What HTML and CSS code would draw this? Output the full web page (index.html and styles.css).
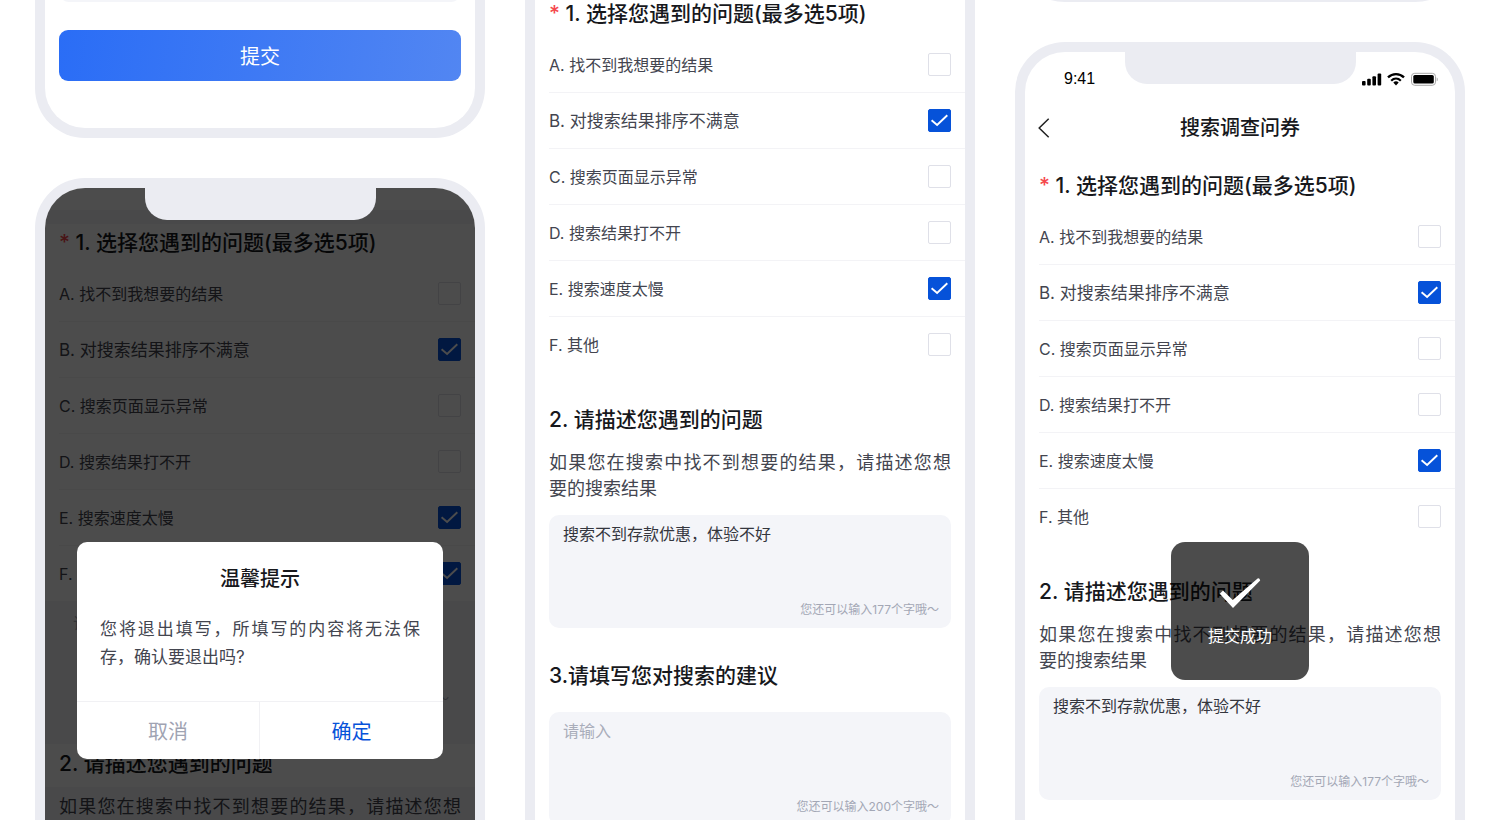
FILE: index.html
```html
<!DOCTYPE html>
<html lang="zh-CN">
<head>
<meta charset="utf-8">
<title>搜索调查问券</title>
<link rel="stylesheet" href="styles.css">
</head>
<body>
<svg class="defs" aria-hidden="true">
  <symbol id="tick" viewBox="0 0 23 23"><path d="M3.6 11.2 9.1 16 19.3 6.2" fill="none" stroke="#fff" stroke-width="1.9"/></symbol>
</svg>
<main class="board">

  <section class="column">
    <div class="phone phone-end">
      <div class="clip"><div class="field-foot"></div></div>
      <button class="submit" type="button">提交</button>
    </div>

    <div class="phone phone-start">
      <div class="notch"></div>
      <form class="form form-dim">
        <div class="strip"></div>
        <h2 class="question"><span class="star">*</span> 1. 选择您遇到的问题(最多选5项)</h2>
        <div class="options">
          <label class="option">A. 找不到我想要的结果<span class="box"><input type="checkbox"><svg><use href="#tick"/></svg></span></label>
          <label class="option option-large">B. 对搜索结果排序不满意<span class="box"><input type="checkbox" checked><svg><use href="#tick"/></svg></span></label>
          <label class="option">C. 搜索页面显示异常<span class="box"><input type="checkbox"><svg><use href="#tick"/></svg></span></label>
          <label class="option">D. 搜索结果打不开<span class="box"><input type="checkbox"><svg><use href="#tick"/></svg></span></label>
          <label class="option">E. 搜索速度太慢<span class="box"><input type="checkbox" checked><svg><use href="#tick"/></svg></span></label>
          <label class="option">F. 其他<span class="box"><input type="checkbox" checked><svg><use href="#tick"/></svg></span></label>
        </div>
        <div class="band">
          <div class="field"><textarea aria-label="其他问题" placeholder="请输入"></textarea><span class="counter">您还可以输入200个字哦～</span></div>
        </div>
        <h2 class="question question-band">2. 请描述您遇到的问题</h2>
        <p class="hint hint-band"><span class="hint-full">如果您在搜索中找不到想要的结果，请描述您想</span><span>要的搜索结果</span></p>
      </form>
      <div class="shade"></div>
      <div class="dialog" role="dialog" aria-labelledby="dialog-title">
        <h3 class="dialog-title" id="dialog-title">温馨提示</h3>
        <p class="dialog-text">您将退出填写，所填写的内容将无法保存，确认要退出吗?</p>
        <div class="dialog-actions">
          <button type="button" class="cancel">取消</button>
          <button type="button" class="confirm">确定</button>
        </div>
      </div>
    </div>
  </section>

  <section class="column">
    <div class="phone phone-middle">
      <form class="form">
        <h2 class="question"><span class="star">*</span> 1. 选择您遇到的问题(最多选5项)</h2>
        <div class="options">
          <label class="option">A. 找不到我想要的结果<span class="box"><input type="checkbox"><svg><use href="#tick"/></svg></span></label>
          <label class="option option-large">B. 对搜索结果排序不满意<span class="box"><input type="checkbox" checked><svg><use href="#tick"/></svg></span></label>
          <label class="option">C. 搜索页面显示异常<span class="box"><input type="checkbox"><svg><use href="#tick"/></svg></span></label>
          <label class="option">D. 搜索结果打不开<span class="box"><input type="checkbox"><svg><use href="#tick"/></svg></span></label>
          <label class="option">E. 搜索速度太慢<span class="box"><input type="checkbox" checked><svg><use href="#tick"/></svg></span></label>
          <label class="option">F. 其他<span class="box"><input type="checkbox"><svg><use href="#tick"/></svg></span></label>
        </div>
        <h2 class="question question-next">2. 请描述您遇到的问题</h2>
        <p class="hint"><span class="hint-full">如果您在搜索中找不到想要的结果，请描述您想</span><span>要的搜索结果</span></p>
        <div class="field"><textarea aria-label="请描述您遇到的问题">搜索不到存款优惠，体验不好</textarea><span class="counter">您还可以输入177个字哦～</span></div>
        <h2 class="question question-next">3.请填写您对搜索的建议</h2>
        <div class="field field-far"><textarea aria-label="请填写您对搜索的建议" placeholder="请输入"></textarea><span class="counter">您还可以输入200个字哦～</span></div>
      </form>
    </div>
  </section>

  <section class="column">
    <div class="clip"><div class="phone phone-foot"></div></div>

    <div class="phone phone-start">
      <div class="notch"></div>
      <div class="status">
        <span>9:41</span>
        <svg class="status-icons" width="77" height="14" viewBox="0 0 77 14">
          <rect x="1" y="9" width="3.6" height="4.4" rx="1"/>
          <rect x="6.2" y="6.8" width="3.6" height="6.6" rx="1"/>
          <rect x="11.4" y="4.2" width="3.6" height="9.2" rx="1"/>
          <rect x="16.6" y="1.4" width="3.6" height="12" rx="1"/>
          <path d="M27 5.4C31.5.9 38.5.9 43 5.4" fill="none" stroke="#000" stroke-width="2.3"/>
          <path d="M30.2 8.7C33 6 37 6 39.8 8.7" fill="none" stroke="#000" stroke-width="2.2"/>
          <path d="M32.3 10.6a3.9 3.9 0 0 1 5.4 0L35 13.4z"/>
          <rect x="50.5" y="1.3" width="24" height="12" rx="3.2" fill="none" stroke="#a8a8a8"/>
          <rect x="52.3" y="3" width="20.5" height="8.6" rx="1.6"/>
          <path d="M75.7 5.5v3.8c1.4-.6 1.4-3.2 0-3.8z" fill="#a8a8a8"/>
        </svg>
      </div>
      <header class="nav">
        <button class="back" type="button" aria-label="返回"><svg width="12" height="20" viewBox="0 0 12 20"><path d="M10.7.7 1.2 10l9.500 9.300" fill="none" stroke="#222" stroke-width="1.5"/></svg></button>
        <h1 class="nav-title">搜索调查问券</h1>
      </header>
      <form class="form form-page">
        <h2 class="question"><span class="star">*</span> 1. 选择您遇到的问题(最多选5项)</h2>
        <div class="options">
          <label class="option">A. 找不到我想要的结果<span class="box"><input type="checkbox"><svg><use href="#tick"/></svg></span></label>
          <label class="option option-large">B. 对搜索结果排序不满意<span class="box"><input type="checkbox" checked><svg><use href="#tick"/></svg></span></label>
          <label class="option">C. 搜索页面显示异常<span class="box"><input type="checkbox"><svg><use href="#tick"/></svg></span></label>
          <label class="option">D. 搜索结果打不开<span class="box"><input type="checkbox"><svg><use href="#tick"/></svg></span></label>
          <label class="option">E. 搜索速度太慢<span class="box"><input type="checkbox" checked><svg><use href="#tick"/></svg></span></label>
          <label class="option">F. 其他<span class="box"><input type="checkbox"><svg><use href="#tick"/></svg></span></label>
        </div>
        <h2 class="question question-next">2. 请描述您遇到的问题</h2>
        <p class="hint"><span class="hint-full">如果您在搜索中找不到想要的结果，请描述您想</span><span>要的搜索结果</span></p>
        <div class="field"><textarea aria-label="请描述您遇到的问题">搜索不到存款优惠，体验不好</textarea><span class="counter">您还可以输入177个字哦～</span></div>
      </form>
      <div class="toast" role="status">
        <svg width="42" height="30" viewBox="0 0 42 30"><path d="M.8 15.7 4 12.6 13.7 22 38.6.5Q40.5-.2 41.2 2.4L14 30z" fill="#fff"/></svg>
        <span>提交成功</span>
      </div>
    </div>
  </section>

</main>
</body>
</html>
```
FILE: styles.css
```css
* { box-sizing: border-box; }

body {
  margin: 0;
  background: #fff;
  color: #43454f;
  font-family: Inter, "Noto Sans CJK SC", sans-serif;
  font-size: 16px;
}

h1, h2, h3, p { margin: 0; }

button, textarea { font-family: inherit; }

button {
  border: 0;
  padding: 0;
  background: none;
}

.defs {
  display: block;
  width: 0;
  height: 0;
}

.board {
  display: grid;
  grid-template-columns: repeat(3, minmax(0, 1fr));
  gap: 40px;
  height: 100vh;
  padding: 0 35px;
  overflow: hidden;
}

.column {
  display: flex;
  flex-direction: column;
  gap: 40px;
}

/* Phone frames */
.phone {
  position: relative;
  border: 10px solid #ebecf2;
  background: #fff;
  overflow: hidden;
}

.phone-end {
  flex: none;
  border-top: 0;
  border-radius: 0 0 50px 50px;
  padding: 0 14px 47px;
}

.phone-start {
  flex: 1 0 auto;
  border-bottom: 0;
  border-radius: 50px 50px 0 0;
}

.phone-middle {
  flex: 1 0 auto;
  border-top: 0;
  border-bottom: 0;
}

.phone-foot {
  flex: 1 0 auto;
  height: 100px;
  border-radius: 50px;
}

.clip {
  display: flex;
  flex: none;
  align-items: flex-end;
  height: 2px;
  overflow: hidden;
}

.field-foot {
  flex: 1;
  height: 40px;
  border-radius: 10px;
  background: #f4f5f9;
}

.notch {
  position: absolute;
  z-index: 2;
  top: 0;
  left: 50%;
  width: 231px;
  height: 32px;
  margin-left: -115px;
  border-radius: 0 0 22px 22px;
  background: #ebecf2;
}

.submit {
  display: block;
  width: 100%;
  height: 51px;
  margin-top: 28px;
  border-radius: 9px;
  background: linear-gradient(100deg, #2a6df6, #5286f2);
  color: #fff;
  font-size: 20px;
}

/* Status and navigation bars */
.status {
  display: flex;
  align-items: center;
  justify-content: space-between;
  height: 54px;
  padding: 0 17px 0 39px;
  color: #000;
  font-family: "Liberation Sans", sans-serif;
}

.nav {
  display: grid;
  grid-template-columns: 40px 1fr 40px;
  align-items: center;
  height: 44px;
  padding: 0 13px;
}

.back {
  display: flex;
  align-items: center;
  height: 44px;
}

.nav-title {
  color: #17181c;
  font-size: 20px;
  font-weight: 500;
  line-height: 28px;
  text-align: center;
}

/* Survey form */
.form-page { padding-top: 22px; }

.form-dim { padding-top: 22px; }

.strip {
  height: 14px;
  margin-bottom: 5px;
  background: #f4f5f9;
}

.question {
  padding: 0 14px;
  color: #17181c;
  font-size: 21px;
  font-weight: 500;
  line-height: 28px;
}

.question-next { margin-top: 34px; }

.question-band { padding: 6px 14px 9px; }

.star { color: #f5484d; }

.options { padding: 8px 0 0 14px; }

.option {
  display: flex;
  align-items: center;
  justify-content: space-between;
  height: 56px;
  padding-right: 14px;
  border-top: 1px solid #f3f3f6;
  line-height: 24px;
}

.option:first-child { border-top-color: transparent; }

.option-large { font-size: 17px; }

.box {
  display: grid;
  width: 23px;
  height: 23px;
}

.box input,
.box svg {
  grid-area: 1 / 1;
  width: 23px;
  height: 23px;
  margin: 0;
}

.box input {
  appearance: none;
  border: 1px solid #dfe0e8;
  border-radius: 2px;
  background: #fff;
}

.box input:checked {
  border-color: #0652d9;
  background: #0652d9;
}

.box svg {
  visibility: hidden;
  pointer-events: none;
}

.box input:checked + svg { visibility: visible; }

.hint {
  padding: 16px 14px 0;
  font-size: 18px;
  line-height: 26px;
}

.hint span { display: block; }

.hint .hint-full { text-align-last: justify; }

.hint-band {
  padding-top: 7px;
  background: #f4f5f9;
}

.field {
  display: flex;
  flex-direction: column;
  height: 113px;
  margin: 13px 14px 0;
  padding: 7px 12px 10px 14px;
  border-radius: 10px;
  background: #f4f5f9;
}

.field-far { margin-top: 22px; }

.band {
  padding: 3px 0 27px;
  background: #f4f5f9;
}

.band .field { margin-top: 0; }

.field textarea {
  flex: 1;
  min-height: 0;
  padding: 0;
  border: 0;
  outline: 0;
  background: none;
  color: #34363e;
  font-size: 16px;
  line-height: 24px;
  resize: none;
}

.field textarea::placeholder { color: #a9adba; }

.counter {
  color: #a3a7b5;
  font-size: 12px;
  line-height: 16px;
  text-align: right;
}

/* Layers over the form */
.shade {
  position: absolute;
  inset: 0;
  background: rgba(0, 0, 0, 0.7);
}

.dialog {
  position: absolute;
  top: 354px;
  left: 32px;
  right: 32px;
  border-radius: 10px;
  background: #fff;
  overflow: hidden;
}

.dialog-title {
  padding-top: 23px;
  color: #17181c;
  font-size: 20px;
  font-weight: 500;
  line-height: 28px;
  text-align: center;
}

.dialog-text {
  padding: 22px 23px 30px;
  font-size: 17px;
  line-height: 28px;
  text-align: justify;
}

.dialog-actions {
  display: grid;
  grid-template-columns: 1fr 1fr;
  border-top: 1px solid #f1f1f4;
}

.dialog-actions button {
  height: 57px;
  font-size: 20px;
}

.dialog-actions .cancel {
  border-right: 1px solid #f1f1f4;
  color: #9fa3b2;
}

.dialog-actions .confirm { color: #0652d9; }

.toast {
  position: absolute;
  top: 490px;
  left: 50%;
  display: flex;
  flex-direction: column;
  align-items: center;
  gap: 16px;
  width: 138px;
  height: 138px;
  margin-left: -69px;
  padding-top: 36px;
  border-radius: 14px;
  background: rgba(0, 0, 0, 0.7);
  color: #fff;
  line-height: 24px;
}
```
